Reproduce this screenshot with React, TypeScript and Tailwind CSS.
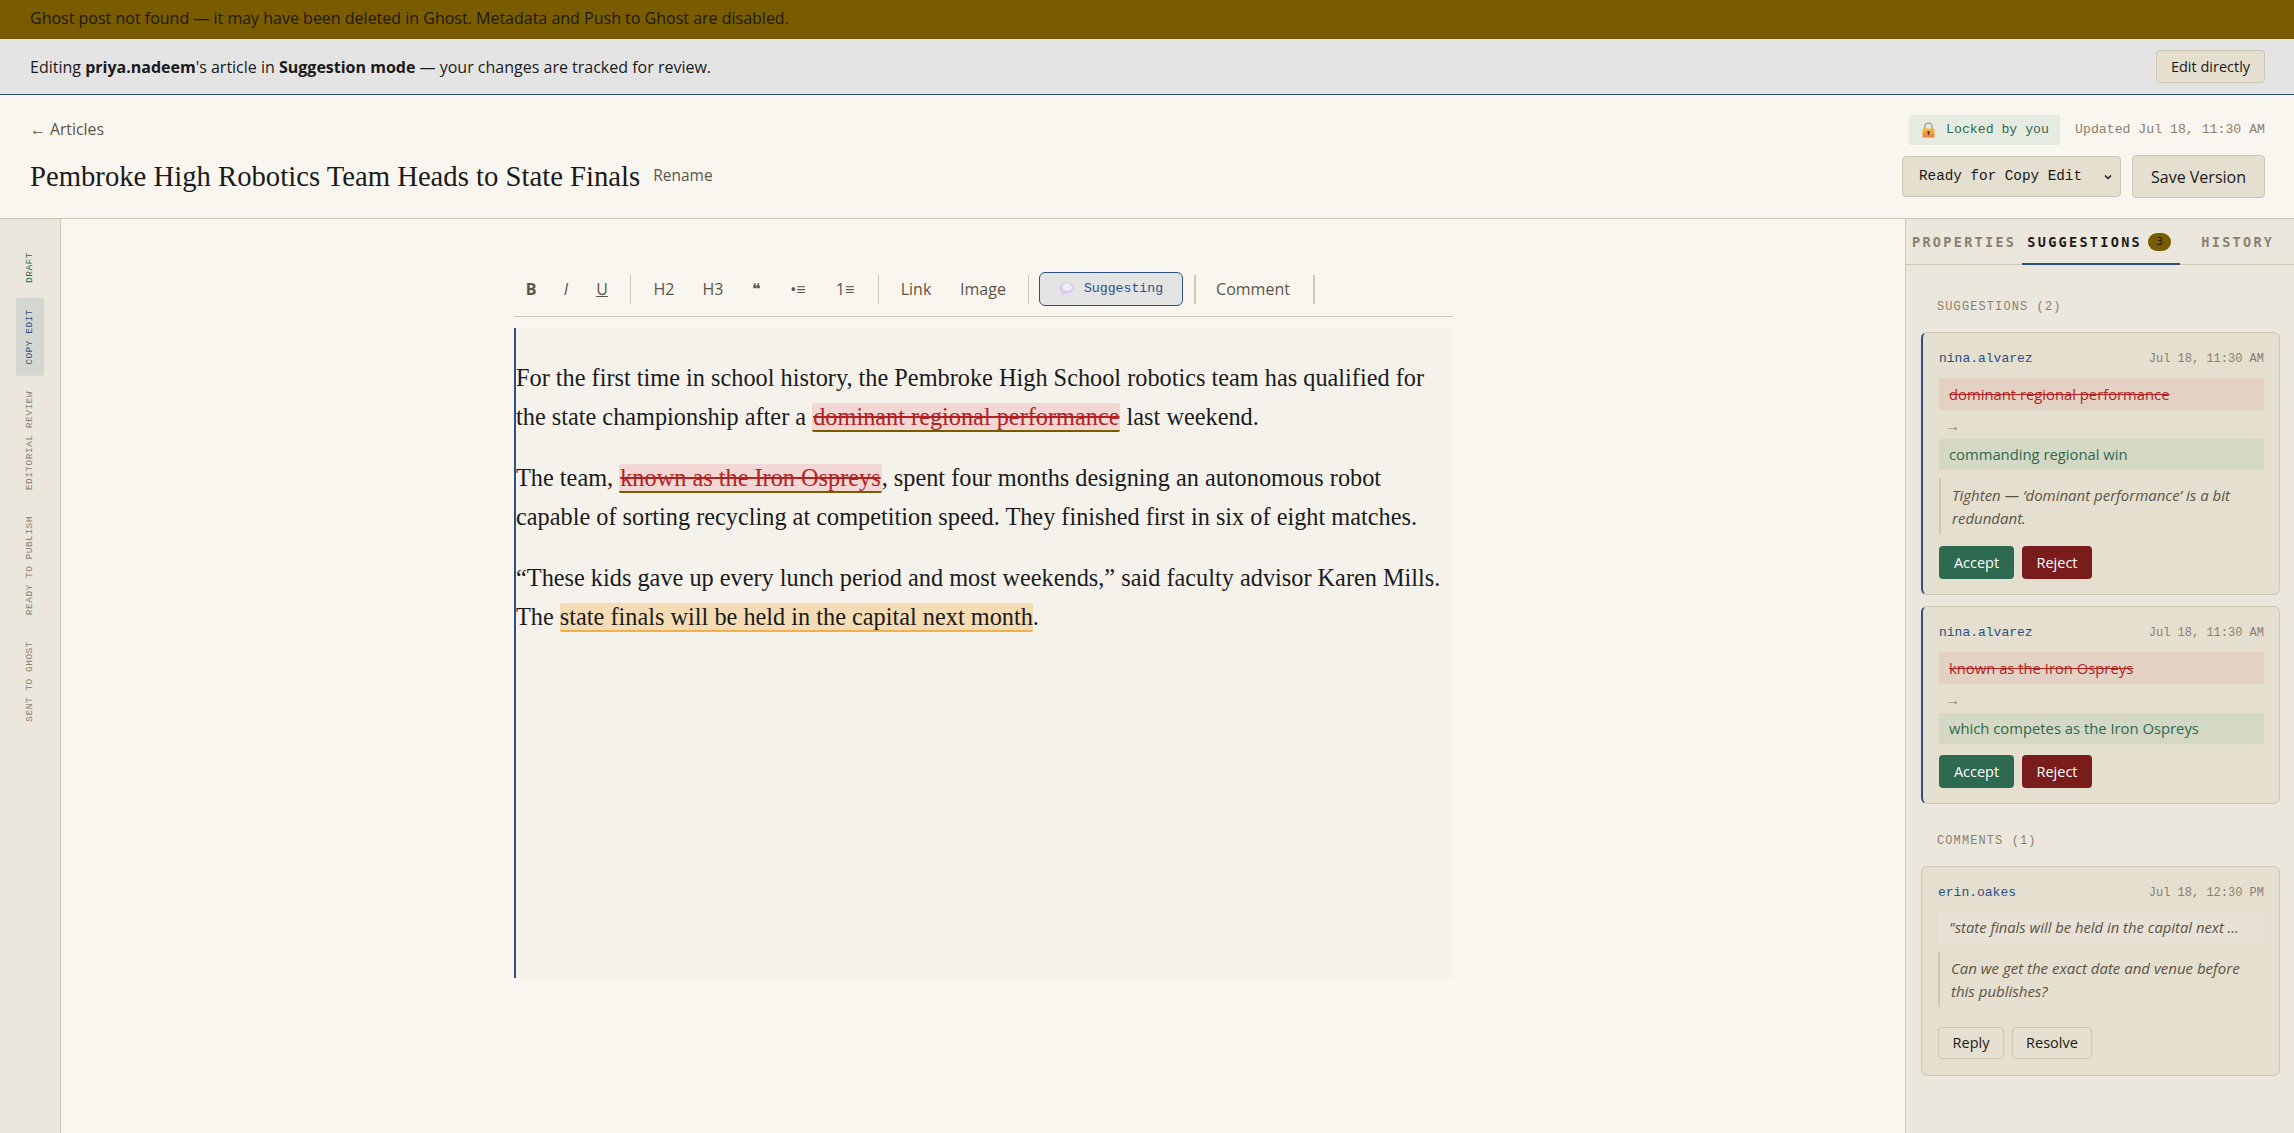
import React from 'react'

const mono = "font-['Liberation_Mono',monospace]"

function LockIcon() {
  return (
    <svg width="13" height="16" viewBox="0 0 13 16" className="shrink-0">
      <defs>
        <linearGradient id="lockBody" x1="0" y1="0" x2="0" y2="1">
          <stop offset="0" stopColor="#f9b944" />
          <stop offset="1" stopColor="#f47c3c" />
        </linearGradient>
      </defs>
      <path d="M3 7V4.5a3.5 3.5 0 0 1 7 0V7" fill="none" stroke="#a9a6ad" strokeWidth="1.6" />
      <rect x="0.5" y="6.5" width="12" height="9" rx="1.2" fill="url(#lockBody)" />
      <circle cx="6.5" cy="10.3" r="1.2" fill="#3c3340" />
      <rect x="6" y="10.5" width="1" height="2.6" fill="#3c3340" />
    </svg>
  )
}

function BubbleIcon() {
  return (
    <svg width="15" height="14" viewBox="0 0 15 14" className="shrink-0">
      <ellipse cx="7.5" cy="6" rx="7" ry="5.5" fill="#d9c9ee" />
      <ellipse cx="8" cy="5.2" rx="5" ry="3.6" fill="#f3edf9" />
      <path d="M4 9.5 L3.5 13.5 L8 11 Z" fill="#d9c9ee" />
    </svg>
  )
}

function Sep({ className }: { className: string }) {
  return <span className={`block h-[29px] bg-[#cdc8b5] ${className}`} />
}

function ToolBtn({ children, className }: { children: React.ReactNode; className?: string }) {
  return <button className={`text-[#5c5446] text-[16px] text-center shrink-0 ${className ?? ''}`}>{children}</button>
}

function RailItem({ label, state }: { label: string; state?: 'done' | 'active' }) {
  return (
    <div
      className={`${mono} [writing-mode:vertical-rl] rotate-180 text-[9.5px] leading-[12px] tracking-[0.5px] w-[28px] flex items-center justify-center pt-[11px] pb-[11px] rounded-[2px] ${
        state === 'active' ? 'bg-[#d6d6d0] text-[#2c4f85]' : state === 'done' ? 'text-[#2d6a4f]' : 'text-[#8a8070]'
      }`}
    >
      {label}
    </div>
  )
}

function CardHead({ author, date }: { author: string; date: string }) {
  return (
    <div className={`flex justify-between items-center ${mono} leading-[18px]`}>
      <span className="text-[13px] text-[#2c4f85]">{author}</span>
      <span className="text-[12px] text-[#8a8070]">{date}</span>
    </div>
  )
}

function Suggestion({ author, del, add, note }: { author: string; del: string; add: string; note?: string }) {
  return (
    <div className="bg-[#e5dfd0] border border-[#cdc8b5] border-l-[2px] border-l-[#2c4f85] rounded-[6px] pl-[16px] pr-[15px] pt-[17px] pb-[15px]">
      <CardHead author={author} date="Jul 18, 11:30 AM" />
      <div className="mt-[10px] bg-[#e3d2c3] rounded-[2px] h-[32px] px-[10px] flex items-center text-[14.8px] text-[#b22222] line-through">
        {del}
      </div>
      <div className="text-[#8a8070] text-[15px] leading-[18px] mt-[6px] pl-[6px]">→</div>
      <div className="mt-[5px] bg-[#d5d8c5] rounded-[2px] h-[31px] px-[10px] flex items-center text-[14.8px] text-[#2d6a4f]">
        {add}
      </div>
      {note && (
        <div className="mt-[8px] border-l-[2px] border-[#cdc8b5] pl-[11px] h-[57px] flex items-center italic text-[15px] leading-[23px] text-[#5c5446]">
          <span>{note}</span>
        </div>
      )}
      <div className="mt-[11px] flex gap-[8px]">
        <button className="w-[75px] h-[33px] rounded-[4px] bg-[#2d6a4f] text-white text-[14.5px]">Accept</button>
        <button className="w-[70px] h-[33px] rounded-[4px] bg-[#7b1c1c] text-white text-[14.5px]">Reject</button>
      </div>
    </div>
  )
}

export default function App() {
  return (
    <div className="h-screen flex flex-col overflow-hidden bg-[#f9f6ef] text-[#1a1a1a] font-['Open_Sans',sans-serif]">
      <div className="h-[39px] shrink-0 bg-[#7a5c00] px-[30px] flex items-center text-[16px] pb-[4px]">
        Ghost post not found — it may have been deleted in Ghost. Metadata and Push to Ghost are disabled.
      </div>

      <div className="h-[56px] shrink-0 bg-[#e4e4e4] border-b border-[#2c4f85] pl-[30px] pr-[29px] flex items-center justify-between text-[16px]">
        <div>
          Editing <strong>priya.nadeem</strong>'s article in <strong>Suggestion mode</strong> — your changes are tracked for review.
        </div>
        <button className="w-[109px] h-[33px] bg-[#e5dfd0] border border-[#cdc8b5] rounded-[4px] text-[14.5px]">Edit directly</button>
      </div>

      <div className="h-[124px] shrink-0 border-b border-[#cdc8b5] pl-[30px] pr-[29px] flex justify-between">
        <div className="pt-[23px]">
          <div className="text-[15.8px] leading-[22px] text-[#5c5446]">← Articles</div>
          <div className="mt-[18px] flex items-center gap-[13px]">
            <h1 className="font-['Liberation_Serif',serif] text-[28.7px] leading-[36px]">Pembroke High Robotics Team Heads to State Finals</h1>
            <button className="text-[15.5px] text-[#5c5446]">Rename</button>
          </div>
        </div>
        <div className="pt-[20px] flex flex-col items-end">
          <div className="flex items-center gap-[15px]">
            <div className={`${mono} w-[151px] h-[30px] rounded-[2px] bg-[#e6ebe1] text-[#2d6a4f] text-[13.2px] flex items-center gap-[11px] pl-[13px]`}>
              <LockIcon />
              Locked by you
            </div>
            <span className={`${mono} text-[13.2px] text-[#8a8070]`}>Updated Jul 18, 11:30 AM</span>
          </div>
          <div className="mt-[10px] flex items-center gap-[11px]">
            <div className={`${mono} w-[219px] h-[41px] bg-[#e5dfd0] border border-[#cdc8b5] rounded-[4px] flex items-center justify-between pl-[16px] pr-[7px] text-[14.3px]`}>
              Ready for Copy Edit
              <svg width="10" height="10" viewBox="0 0 10 10"><path d="M2 3.5 L5 6.5 L8 3.5" fill="none" stroke="#1a1a1a" strokeWidth="1.5" /></svg>
            </div>
            <button className="w-[133px] h-[43px] bg-[#e5dfd0] border border-[#cdc8b5] rounded-[4px] text-[16px]">Save Version</button>
          </div>
        </div>
      </div>

      <div className="flex-1 min-h-0 flex">
        <div className="w-[61px] shrink-0 bg-[#ebe7dc] border-r border-[#cdc8b5] pt-[22px] pl-[16px] flex flex-col gap-[4px]">
          <RailItem label="DRAFT" state="done" />
          <RailItem label="COPY EDIT" state="active" />
          <RailItem label="EDITORIAL REVIEW" />
          <RailItem label="READY TO PUBLISH" />
          <RailItem label="SENT TO GHOST" />
        </div>

        <div className="flex-1 min-w-0 pl-[453px] pt-[53px]">
          <div className="w-[939px]">
            <div className="h-[45px] border-b border-[#cdc8b5] flex items-start">
              <div className="h-[34px] flex items-center">
                <ToolBtn className="w-[34px] font-bold">B</ToolBtn>
                <ToolBtn className="w-[36px] italic">I</ToolBtn>
                <ToolBtn className="w-[36px] underline">U</ToolBtn>
                <Sep className="ml-[10px] w-px" />
                <ToolBtn className="ml-[10px] w-[46px]">H2</ToolBtn>
                <ToolBtn className="w-[52px]">H3</ToolBtn>
                <ToolBtn className="w-[34px]">❝</ToolBtn>
                <ToolBtn className="w-[50px]">•≡</ToolBtn>
                <ToolBtn className="w-[44px]">1≡</ToolBtn>
                <Sep className="ml-[11px] w-px" />
                <ToolBtn className="ml-[7px] w-[60px]">Link</ToolBtn>
                <ToolBtn className="w-[74px]">Image</ToolBtn>
                <Sep className="ml-[8px] w-px" />
                <button className={`${mono} ml-[10px] w-[144px] h-[34px] rounded-[6px] border border-[#2c4f85] bg-[#e4e4e4] text-[#2c4f85] text-[13.2px] flex items-center justify-center gap-[10px]`}>
                  <BubbleIcon />
                  Suggesting
                </button>
                <Sep className="ml-[11px] w-[2px]" />
                <ToolBtn className="ml-[10px] w-[94px]">Comment</ToolBtn>
                <Sep className="ml-[13px] w-[2px]" />
              </div>
            </div>
            <div className="mt-[11px] h-[650px] bg-[#f5f2ec] border-l-[2px] border-[#2c4f85] pt-[30px] font-['Liberation_Serif',serif] text-[24.3px] leading-[39px] text-[#1a1a1a]">
              <p>
                For the first time in school history, the Pembroke High School robotics team has qualified for<br />
                the state championship after a{' '}
                <span className="bg-[#f2d7d5] text-[#b22222] line-through border-b-2 border-[#7a5c00] rounded-[2px] px-[1px]">dominant regional performance</span>{' '}
                last weekend.
              </p>
              <p className="mt-[22px]">
                The team,{' '}
                <span className="bg-[#f2d7d5] text-[#b22222] line-through border-b-2 border-[#7a5c00] rounded-[2px] px-[1px]">known as the Iron Ospreys</span>
                , spent four months designing an autonomous robot<br />
                capable of sorting recycling at competition speed. They finished first in six of eight matches.
              </p>
              <p className="mt-[22px]">
                “These kids gave up every lunch period and most weekends,” said faculty advisor Karen Mills.<br />
                The{' '}
                <span className="bg-[#f5dcb5] border-b-2 border-[#f0b04f] rounded-[2px]">state finals will be held in the capital next month</span>.
              </p>
            </div>
          </div>
        </div>

        <div className="w-[389px] shrink-0 bg-[#ebe7dc] border-l border-[#cdc8b5] flex flex-col">
          <div className="h-[46px] shrink-0 border-b border-[#cdc8b5] flex items-stretch font-['DejaVu_Sans_Mono',monospace] font-bold text-[13.5px] tracking-[2.3px] pl-[6px] pt-[2px]">
            <div className="flex items-center text-[#8a8070] pr-[6px]">PROPERTIES</div>
            <div className="w-[158px] flex items-center border-b-2 border-[#2c4f85] -mb-px text-[#1a1a1a] pl-[5px]">
              SUGGESTIONS
              <span className="ml-[6px] w-[23px] h-[18px] rounded-[9px] bg-[#7a5c00] text-[11px] tracking-normal flex items-center justify-center font-normal">3</span>
            </div>
            <div className="ml-[21px] flex items-center text-[#8a8070]">HISTORY</div>
          </div>

          <div className="flex-1 min-h-0 pl-[15px] pr-[14px]">
            <div className={`${mono} mt-[34px] ml-[16px] text-[12px] leading-[16px] tracking-[1.1px] text-[#8a8070]`}>SUGGESTIONS (2)</div>
            <div className="mt-[17px] flex flex-col gap-[11px]">
              <Suggestion
                author="nina.alvarez"
                del="dominant regional performance"
                add="commanding regional win"
                note="Tighten — ‘dominant performance’ is a bit redundant."
              />
              <Suggestion author="nina.alvarez" del="known as the Iron Ospreys" add="which competes as the Iron Ospreys" />
            </div>
            <div className={`${mono} mt-[29px] ml-[16px] text-[12px] leading-[16px] tracking-[1.1px] text-[#8a8070]`}>COMMENTS (1)</div>
            <div className="mt-[17px] bg-[#e5dfd0] border border-[#cdc8b5] rounded-[6px] pl-[16px] pr-[15px] pt-[17px] pb-[16px]">
              <CardHead author="erin.oakes" date="Jul 18, 12:30 PM" />
              <div className="mt-[9px] bg-[#e8e1d6] rounded-[2px] h-[33px] pl-[11px] pr-[10px] flex items-center text-[14.8px] italic text-[#5c5446]">
                <span className="whitespace-nowrap overflow-hidden">"state finals will be held in the capital next ...</span>
              </div>
              <div className="mt-[8px] border-l-[2px] border-[#cdc8b5] pl-[11px] h-[55px] flex items-center italic text-[15px] leading-[23px] text-[#5c5446]">
                <span>Can we get the exact date and venue before this publishes?</span>
              </div>
              <div className="mt-[20px] flex gap-[8px]">
                <button className="w-[66px] h-[32px] rounded-[4px] border border-[#cdc8b5] text-[14.5px]">Reply</button>
                <button className="w-[80px] h-[32px] rounded-[4px] border border-[#cdc8b5] text-[14.5px]">Resolve</button>
              </div>
            </div>
          </div>
        </div>
      </div>
    </div>
  )
}
